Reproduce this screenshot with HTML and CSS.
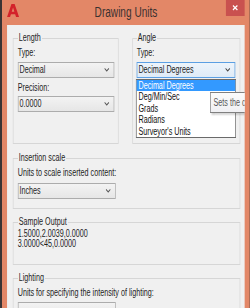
FILE: index.html
```html
<!DOCTYPE html>
<html>
<head>
<meta charset="utf-8">
<link rel="stylesheet" href="styles.css">
</head>
<body>
<div class="window">
  <div class="titlebar">
    <svg class="app-icon" viewBox="0 0 12 13" preserveAspectRatio="none">
      <path fill="#d3232a" fill-rule="evenodd" d="M0 13 L4.4 0 L7.6 0 L12 13 L9 13 L8.1 10.2 L3.9 10.2 L3 13 Z M4.7 7.7 L7.3 7.7 L6 3.6 Z"/>
    </svg>
    <div class="title">Drawing Units</div>
    <div class="close">
      <svg viewBox="0 0 6 6" preserveAspectRatio="none"><path d="M0.5 0.5 L5.5 5.5 M5.5 0.5 L0.5 5.5" stroke="#fff" stroke-width="1.3"/></svg>
    </div>
  </div>
  <div class="client">
    <div class="top-row">
      <fieldset class="group top-group">
        <legend>Length</legend>
        <div class="label">Type:</div>
        <div class="combo gap-s"><span>Decimal</span><svg class="chev" viewBox="0 0 5 3" preserveAspectRatio="none"><path d="M0.3 0.3 L2.5 2.6 L4.7 0.3" fill="none" stroke="#5a5a5a" stroke-width="0.9"/></svg></div>
        <div class="label gap-m">Precision:</div>
        <div class="combo gap-xs"><span>0.0000</span><svg class="chev" viewBox="0 0 5 3" preserveAspectRatio="none"><path d="M0.3 0.3 L2.5 2.6 L4.7 0.3" fill="none" stroke="#5a5a5a" stroke-width="0.9"/></svg></div>
      </fieldset>
      <fieldset class="group top-group">
        <legend>Angle</legend>
        <div class="label">Type:</div>
        <div class="combo-wrap gap-s">
          <div class="combo focused"><span>Decimal Degrees</span><svg class="chev" viewBox="0 0 5 3" preserveAspectRatio="none"><path d="M0.3 0.3 L2.5 2.6 L4.7 0.3" fill="none" stroke="#4a4a4a" stroke-width="0.9"/></svg></div>
          <ul class="dropdown">
            <li class="selected">Decimal Degrees</li>
            <li>Deg/Min/Sec</li>
            <li>Grads</li>
            <li>Radians</li>
            <li>Surveyor's Units</li>
          </ul>
        </div>
      </fieldset>
    </div>

    <fieldset class="group insertion">
      <legend>Insertion scale</legend>
      <div class="label">Units to scale inserted content:</div>
      <div class="combo fixed gap-m"><span>Inches</span><svg class="chev" viewBox="0 0 5 3" preserveAspectRatio="none"><path d="M0.3 0.3 L2.5 2.6 L4.7 0.3" fill="none" stroke="#5a5a5a" stroke-width="0.9"/></svg></div>
    </fieldset>

    <fieldset class="group sample">
      <legend>Sample Output</legend>
      <div class="sample-line">1.5000,2.0039,0.0000</div>
      <div class="sample-line">3.0000&lt;45,0.0000</div>
    </fieldset>

    <fieldset class="group lighting">
      <legend>Lighting</legend>
      <div class="label">Units for specifying the intensity of lighting:</div>
      <div class="combo fixed gap-s"></div>
    </fieldset>

    <div class="tooltip">Sets the current angle format.</div>
  </div>
</div>
</body>
</html>
```

FILE: styles.css
```css
html, body {
  margin: 0;
  padding: 0;
  width: 250px;
  height: 308px;
  overflow: hidden;
  background: #3a3434;
}

.window {
  /* laid out at natural width, then squeezed horizontally as in the capture */
  width: 344.4px;
  margin-left: 2px;
  transform: scaleX(0.72);
  transform-origin: 0 0;
  background: #e38767;
  padding: 0 6.94px;
  box-sizing: border-box;
  height: 308px;
  font-family: "Liberation Sans", Arial, sans-serif;
  font-size: 10px;
  color: #1e1e1e;
}

.titlebar {
  height: 25px;
  display: grid;
  grid-template-columns: 1fr auto 1fr;
  align-items: start;
}

.app-icon {
  width: 16.7px;
  height: 13px;
  margin-top: 4px;
  display: block;
}

.title {
  font-size: 14px;
  line-height: 24px;
  color: #3b3130;
}

.close {
  justify-self: end;
  width: 26.4px;
  height: 16px;
  background: #c9514f;
  display: flex;
  align-items: center;
  justify-content: center;
}

.close svg {
  width: 7.6px;
  height: 5.5px;
  display: block;
}

.client {
  position: relative;
  overflow: hidden;
  background: #f0f0f0;
  height: 283px;
  padding: 7px 6.94px 0 8.33px;
  box-sizing: border-box;
}

.top-row {
  display: grid;
  grid-template-columns: 147.2px 1fr;
  column-gap: 18.06px;
}

.group {
  margin: 0;
  min-width: 0;
  border-style: solid;
  border-color: #d6d6d6;
  border-width: 1px 1.39px;
  padding: 3px 5.56px 0;
}

.group legend {
  padding: 0 1.4px;
  margin-left: 0;
  line-height: 12px;
  font-size: 10px;
  color: #1e1e1e;
}

.top-group {
  padding-bottom: 31px;
}

.label {
  line-height: 12px;
  white-space: nowrap;
}

.gap-xs { margin-top: 2px; }
.gap-s { margin-top: 3px; }
.gap-m { margin-top: 4px; }

.combo {
  height: 16px;
  box-sizing: border-box;
  border: 1px solid #acacac;
  border-width: 1px 1.39px;
  background: linear-gradient(#f3f3f3, #e6e6e6);
  display: flex;
  align-items: center;
  justify-content: space-between;
  padding: 0 6px 0 1.4px;
  line-height: 14px;
  white-space: nowrap;
}

.combo.fixed {
  width: 136.1px;
}

.combo.focused {
  border-color: #5b9fe3;
  background: linear-gradient(#edf4fb, #dfebf7);
}

.chev {
  width: 7px;
  height: 3.4px;
  display: block;
  flex: none;
}

.combo-wrap {
  position: relative;
}

.dropdown {
  position: absolute;
  top: 100%;
  left: -1px;
  right: -1px;
  margin: 1px 0 0;
  padding: 0;
  list-style: none;
  background: #fff;
  border: 1px solid #6a6a6a;
  border-width: 1px 1.39px;
  z-index: 2;
}

.dropdown li {
  line-height: 11.4px;
  height: 11.4px;
  padding-left: 2.5px;
  white-space: nowrap;
  color: #111;
}

.dropdown li.selected {
  background: #3399ff;
  color: #fff;
}

.insertion {
  margin-top: 8px;
  padding-bottom: 9px;
}

.sample {
  margin-top: 7px;
  padding-top: 1px;
  padding-bottom: 15px;
}

.sample-line {
  line-height: 10px;
  white-space: nowrap;
}

.lighting {
  margin-top: 7px;
  padding-bottom: 10px;
}

.tooltip {
  position: absolute;
  top: 67px;
  left: 281.9px;
  height: 21px;
  box-sizing: border-box;
  border: 1px solid #808080;
  border-width: 1px 1.39px;
  background: linear-gradient(#fbfbfb, #f0f0f3);
  box-shadow: 2px 2px 2px rgba(0, 0, 0, 0.18);
  padding: 0 5px 0 4px;
  line-height: 19px;
  color: #575757;
  white-space: nowrap;
  z-index: 3;
}
```
